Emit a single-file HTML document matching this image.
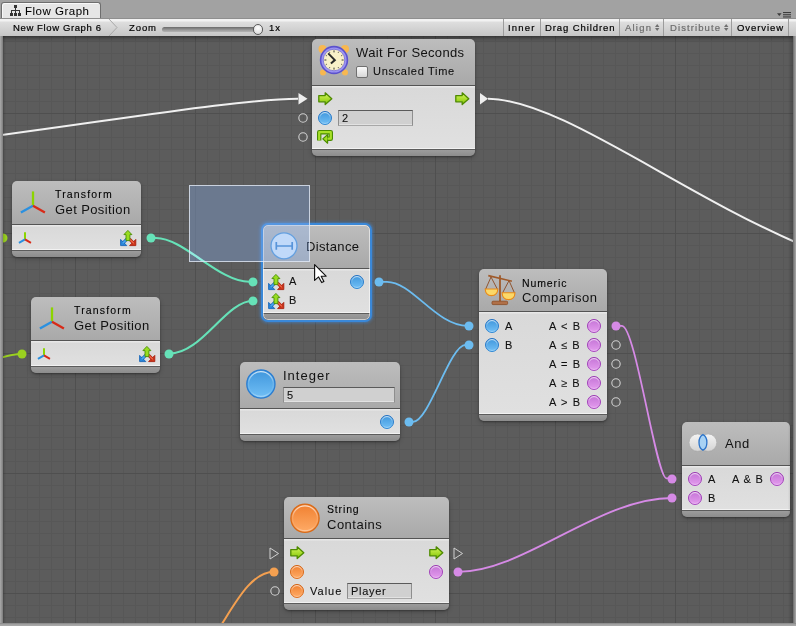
<!DOCTYPE html><html><head><meta charset="utf-8"><style>
*{margin:0;padding:0;box-sizing:border-box}
html,body{width:796px;height:626px;overflow:hidden;background:#a3a3a3;font-family:"Liberation Sans", sans-serif;-webkit-font-smoothing:antialiased}
.t{position:absolute;white-space:pre;will-change:transform}
.a{position:absolute;overflow:visible}
.node{position:absolute;border-radius:5px;overflow:hidden}
.hdr{background:linear-gradient(#bdbdbd,#a9a9a9)}
.sep{height:1px;background:#545454}
.bdy{background:linear-gradient(#e8e8e8 0,#e8e8e8 1px,#d9d9d9 2px,#e0e0e0 100%);border-bottom:1px solid #f2f2f2}
.ftr{background:linear-gradient(#9c9c9c,#8c8c8c);border-top:1px solid #5c5c5c}
.fld{position:absolute;background:#d0d0d0;border:1px solid #8e8e8e;border-top-color:#5a5a5a;border-bottom-color:#a8a8a8;box-shadow:inset 0 -1px 0 #e2e2e2}
</style></head><body>
<div style="position:absolute;left:0;top:0;width:796px;height:18px;background:#a2a2a2"></div>
<div style="position:absolute;left:1px;top:2px;width:100px;height:17px;background:#e6e6e6;border:1px solid #6e6e6e;border-bottom:none;border-radius:3px 3px 0 0;box-shadow:inset 1px 1px 0 #f8f8f8"></div>
<svg class="a" style="left:10px;top:5px" width="12" height="11" viewBox="0 0 12 11" shape-rendering="crispEdges"><rect x="4" y="0" width="3" height="3" fill="#333"/><rect x="5" y="3" width="1" height="2" fill="#333"/><rect x="1" y="5" width="9" height="1" fill="#333"/><rect x="1" y="5" width="1" height="3" fill="#333"/><rect x="5" y="5" width="1" height="3" fill="#333"/><rect x="9" y="5" width="1" height="3" fill="#333"/><rect x="0" y="8" width="3" height="3" fill="#333"/><rect x="4" y="8" width="3" height="3" fill="#333"/><rect x="8" y="8" width="3" height="3" fill="#333"/></svg>
<div class="t" style="left:25.2px;top:6.37px;font-size:11.5px;line-height:11.5px;font-weight:400;letter-spacing:0.5px;color:#000;-webkit-text-stroke:0.05px #000;">Flow Graph</div>
<svg class="a" style="left:776px;top:11px" width="20" height="8"><path d="M1,2.2 H5.6 L3.3,4.9 Z" fill="#3c3c3c"/><rect x="7" y="1" width="8" height="1.1" fill="#3c3c3c"/><rect x="7" y="3.2" width="8" height="1.1" fill="#3c3c3c"/><rect x="7" y="5.4" width="8" height="1.1" fill="#3c3c3c"/></svg>
<div style="position:absolute;left:0;top:18px;width:796px;height:18px;background:linear-gradient(#f2f2f2 0px,#f2f2f2 2px,#dedede 3px,#c6c6c6 100%);border-top:1px solid #8f8f8f"></div>
<div class="t" style="left:12.7px;top:22.66px;font-size:9.5px;line-height:9.5px;font-weight:400;letter-spacing:0.62px;color:#000;-webkit-text-stroke:0.2px #000;">New Flow Graph 6</div>
<svg class="a" style="left:108px;top:19px" width="12" height="17"><path d="M1,0 L9,8.5 L1,17" stroke="#a8a8a8" fill="none"/></svg>
<div class="t" style="left:129px;top:22.66px;font-size:9.5px;line-height:9.5px;font-weight:400;letter-spacing:0.9px;color:#000;-webkit-text-stroke:0.2px #000;">Zoom</div>
<div style="position:absolute;left:162px;top:26.5px;width:96px;height:5px;border-radius:2.5px;background:linear-gradient(#6a6a6a,#9a9a9a 60%,#b4b4b4)"></div>
<div style="position:absolute;left:252.8px;top:24px;width:10.5px;height:10.5px;border-radius:50%;background:radial-gradient(circle at 50% 35%,#ffffff,#d4d4d4);border:1px solid #5a5a5a"></div>
<div class="t" style="left:269.3px;top:22.66px;font-size:9.5px;line-height:9.5px;font-weight:400;letter-spacing:1.0px;color:#000;-webkit-text-stroke:0.2px #000;">1x</div>
<div style="position:absolute;left:503px;top:19px;width:1px;height:17px;background:#9c9c9c"></div>
<div style="position:absolute;left:540px;top:19px;width:1px;height:17px;background:#9c9c9c"></div>
<div style="position:absolute;left:619px;top:19px;width:1px;height:17px;background:#9c9c9c"></div>
<div style="position:absolute;left:663px;top:19px;width:1px;height:17px;background:#9c9c9c"></div>
<div style="position:absolute;left:731px;top:19px;width:1px;height:17px;background:#9c9c9c"></div>
<div style="position:absolute;left:788px;top:19px;width:1px;height:17px;background:#9c9c9c"></div>
<div class="t" style="left:508.1px;top:22.66px;font-size:9.5px;line-height:9.5px;font-weight:400;letter-spacing:1.2px;color:#000;-webkit-text-stroke:0.2px #000;">Inner</div>
<div class="t" style="left:545.3px;top:22.66px;font-size:9.5px;line-height:9.5px;font-weight:400;letter-spacing:0.9px;color:#000;-webkit-text-stroke:0.2px #000;">Drag Children</div>
<div class="t" style="left:625.2px;top:22.66px;font-size:9.5px;line-height:9.5px;font-weight:400;letter-spacing:1.2px;color:#6c6c6c;-webkit-text-stroke:0.2px #6c6c6c;">Align</div>
<div class="t" style="left:669.6px;top:22.66px;font-size:9.5px;line-height:9.5px;font-weight:400;letter-spacing:1.1px;color:#6c6c6c;-webkit-text-stroke:0.2px #6c6c6c;">Distribute</div>
<div class="t" style="left:737.3px;top:22.66px;font-size:9.5px;line-height:9.5px;font-weight:400;letter-spacing:0.93px;color:#000;-webkit-text-stroke:0.2px #000;">Overview</div>
<svg class="a" style="left:655.4px;top:24px" width="5" height="7"><path d="M0,3 L2.2,0 L4.4,3 Z M0,4 L2.2,7 L4.4,4 Z" fill="#707070"/></svg>
<svg class="a" style="left:723.6px;top:24px" width="5" height="7"><path d="M0,3 L2.2,0 L4.4,3 Z M0,4 L2.2,7 L4.4,4 Z" fill="#707070"/></svg>
<div style="position:absolute;left:0;top:36px;width:796px;height:590px;background:#a8a8a8"></div>
<svg class="a" style="left:3px;top:36px" width="790" height="587" shape-rendering="crispEdges"><rect width="790" height="587" fill="#5c5c5c"/><rect x="0" y="0" width="1" height="587" fill="#575757"/><rect x="12" y="0" width="1" height="587" fill="#575757"/><rect x="24" y="0" width="1" height="587" fill="#575757"/><rect x="36" y="0" width="1" height="587" fill="#575757"/><rect x="48" y="0" width="1" height="587" fill="#575757"/><rect x="60" y="0" width="1" height="587" fill="#575757"/><rect x="84" y="0" width="1" height="587" fill="#575757"/><rect x="96" y="0" width="1" height="587" fill="#575757"/><rect x="108" y="0" width="1" height="587" fill="#575757"/><rect x="120" y="0" width="1" height="587" fill="#575757"/><rect x="132" y="0" width="1" height="587" fill="#575757"/><rect x="144" y="0" width="1" height="587" fill="#575757"/><rect x="156" y="0" width="1" height="587" fill="#575757"/><rect x="168" y="0" width="1" height="587" fill="#575757"/><rect x="180" y="0" width="1" height="587" fill="#575757"/><rect x="204" y="0" width="1" height="587" fill="#575757"/><rect x="216" y="0" width="1" height="587" fill="#575757"/><rect x="228" y="0" width="1" height="587" fill="#575757"/><rect x="240" y="0" width="1" height="587" fill="#575757"/><rect x="252" y="0" width="1" height="587" fill="#575757"/><rect x="264" y="0" width="1" height="587" fill="#575757"/><rect x="276" y="0" width="1" height="587" fill="#575757"/><rect x="288" y="0" width="1" height="587" fill="#575757"/><rect x="300" y="0" width="1" height="587" fill="#575757"/><rect x="324" y="0" width="1" height="587" fill="#575757"/><rect x="336" y="0" width="1" height="587" fill="#575757"/><rect x="348" y="0" width="1" height="587" fill="#575757"/><rect x="360" y="0" width="1" height="587" fill="#575757"/><rect x="372" y="0" width="1" height="587" fill="#575757"/><rect x="384" y="0" width="1" height="587" fill="#575757"/><rect x="396" y="0" width="1" height="587" fill="#575757"/><rect x="408" y="0" width="1" height="587" fill="#575757"/><rect x="420" y="0" width="1" height="587" fill="#575757"/><rect x="444" y="0" width="1" height="587" fill="#575757"/><rect x="456" y="0" width="1" height="587" fill="#575757"/><rect x="468" y="0" width="1" height="587" fill="#575757"/><rect x="480" y="0" width="1" height="587" fill="#575757"/><rect x="492" y="0" width="1" height="587" fill="#575757"/><rect x="504" y="0" width="1" height="587" fill="#575757"/><rect x="516" y="0" width="1" height="587" fill="#575757"/><rect x="528" y="0" width="1" height="587" fill="#575757"/><rect x="540" y="0" width="1" height="587" fill="#575757"/><rect x="564" y="0" width="1" height="587" fill="#575757"/><rect x="576" y="0" width="1" height="587" fill="#575757"/><rect x="588" y="0" width="1" height="587" fill="#575757"/><rect x="600" y="0" width="1" height="587" fill="#575757"/><rect x="612" y="0" width="1" height="587" fill="#575757"/><rect x="624" y="0" width="1" height="587" fill="#575757"/><rect x="636" y="0" width="1" height="587" fill="#575757"/><rect x="648" y="0" width="1" height="587" fill="#575757"/><rect x="660" y="0" width="1" height="587" fill="#575757"/><rect x="684" y="0" width="1" height="587" fill="#575757"/><rect x="696" y="0" width="1" height="587" fill="#575757"/><rect x="708" y="0" width="1" height="587" fill="#575757"/><rect x="720" y="0" width="1" height="587" fill="#575757"/><rect x="732" y="0" width="1" height="587" fill="#575757"/><rect x="744" y="0" width="1" height="587" fill="#575757"/><rect x="756" y="0" width="1" height="587" fill="#575757"/><rect x="768" y="0" width="1" height="587" fill="#575757"/><rect x="780" y="0" width="1" height="587" fill="#575757"/><rect x="0" y="5" width="790" height="1" fill="#575757"/><rect x="0" y="17" width="790" height="1" fill="#575757"/><rect x="0" y="29" width="790" height="1" fill="#575757"/><rect x="0" y="41" width="790" height="1" fill="#575757"/><rect x="0" y="53" width="790" height="1" fill="#575757"/><rect x="0" y="65" width="790" height="1" fill="#575757"/><rect x="0" y="89" width="790" height="1" fill="#575757"/><rect x="0" y="101" width="790" height="1" fill="#575757"/><rect x="0" y="113" width="790" height="1" fill="#575757"/><rect x="0" y="125" width="790" height="1" fill="#575757"/><rect x="0" y="137" width="790" height="1" fill="#575757"/><rect x="0" y="149" width="790" height="1" fill="#575757"/><rect x="0" y="161" width="790" height="1" fill="#575757"/><rect x="0" y="173" width="790" height="1" fill="#575757"/><rect x="0" y="185" width="790" height="1" fill="#575757"/><rect x="0" y="209" width="790" height="1" fill="#575757"/><rect x="0" y="221" width="790" height="1" fill="#575757"/><rect x="0" y="233" width="790" height="1" fill="#575757"/><rect x="0" y="245" width="790" height="1" fill="#575757"/><rect x="0" y="257" width="790" height="1" fill="#575757"/><rect x="0" y="269" width="790" height="1" fill="#575757"/><rect x="0" y="281" width="790" height="1" fill="#575757"/><rect x="0" y="293" width="790" height="1" fill="#575757"/><rect x="0" y="305" width="790" height="1" fill="#575757"/><rect x="0" y="329" width="790" height="1" fill="#575757"/><rect x="0" y="341" width="790" height="1" fill="#575757"/><rect x="0" y="353" width="790" height="1" fill="#575757"/><rect x="0" y="365" width="790" height="1" fill="#575757"/><rect x="0" y="377" width="790" height="1" fill="#575757"/><rect x="0" y="389" width="790" height="1" fill="#575757"/><rect x="0" y="401" width="790" height="1" fill="#575757"/><rect x="0" y="413" width="790" height="1" fill="#575757"/><rect x="0" y="425" width="790" height="1" fill="#575757"/><rect x="0" y="449" width="790" height="1" fill="#575757"/><rect x="0" y="461" width="790" height="1" fill="#575757"/><rect x="0" y="473" width="790" height="1" fill="#575757"/><rect x="0" y="485" width="790" height="1" fill="#575757"/><rect x="0" y="497" width="790" height="1" fill="#575757"/><rect x="0" y="509" width="790" height="1" fill="#575757"/><rect x="0" y="521" width="790" height="1" fill="#575757"/><rect x="0" y="533" width="790" height="1" fill="#575757"/><rect x="0" y="545" width="790" height="1" fill="#575757"/><rect x="0" y="569" width="790" height="1" fill="#575757"/><rect x="0" y="581" width="790" height="1" fill="#575757"/><rect x="72" y="0" width="1" height="587" fill="#4f4f4f"/><rect x="192" y="0" width="1" height="587" fill="#4f4f4f"/><rect x="312" y="0" width="1" height="587" fill="#4f4f4f"/><rect x="432" y="0" width="1" height="587" fill="#4f4f4f"/><rect x="552" y="0" width="1" height="587" fill="#4f4f4f"/><rect x="672" y="0" width="1" height="587" fill="#4f4f4f"/><rect x="0" y="77" width="790" height="1" fill="#4f4f4f"/><rect x="0" y="197" width="790" height="1" fill="#4f4f4f"/><rect x="0" y="317" width="790" height="1" fill="#4f4f4f"/><rect x="0" y="437" width="790" height="1" fill="#4f4f4f"/><rect x="0" y="557" width="790" height="1" fill="#4f4f4f"/></svg>
<div style="position:absolute;left:3px;top:36px;width:790px;height:7px;background:linear-gradient(rgba(0,0,0,.4),rgba(0,0,0,.12) 45%,rgba(0,0,0,0))"></div>
<div style="position:absolute;left:190px;top:186px;width:119px;height:75px;background:#5c5c5c"></div>
<div style="position:absolute;left:195px;top:186px;width:1px;height:75px;background:#535353"></div>
<svg width="0" height="0" style="position:absolute"><defs>
<linearGradient id="gArrow" x1="0" y1="0" x2="0" y2="1"><stop offset="0" stop-color="#d8f860"/><stop offset="1" stop-color="#80c400"/></linearGradient>
<linearGradient id="hl" x1="0" y1="0" x2="0" y2="1"><stop offset="0" stop-color="#fff" stop-opacity=".75"/><stop offset=".45" stop-color="#fff" stop-opacity=".15"/><stop offset=".8" stop-color="#fff" stop-opacity=".05"/><stop offset="1" stop-color="#fff" stop-opacity=".35"/></linearGradient>
<linearGradient id="gblue" x1="0" y1="0" x2="0" y2="1"><stop offset="0" stop-color="#3f96dc"/><stop offset="1" stop-color="#72c0f6"/></linearGradient>
<linearGradient id="sblue" x1="0" y1="0" x2="0" y2="1"><stop offset="0" stop-color="#2470c0"/><stop offset="1" stop-color="#3088d4"/></linearGradient>
<linearGradient id="gpink" x1="0" y1="0" x2="0" y2="1"><stop offset="0" stop-color="#c474d6"/><stop offset="1" stop-color="#e49cee"/></linearGradient>
<linearGradient id="spink" x1="0" y1="0" x2="0" y2="1"><stop offset="0" stop-color="#9838b0"/><stop offset="1" stop-color="#a848c0"/></linearGradient>
<linearGradient id="gorange" x1="0" y1="0" x2="0" y2="1"><stop offset="0" stop-color="#f08030"/><stop offset="1" stop-color="#ffac68"/></linearGradient>
<linearGradient id="sorange" x1="0" y1="0" x2="0" y2="1"><stop offset="0" stop-color="#d06010"/><stop offset="1" stop-color="#e07020"/></linearGradient>
</defs></svg>
<svg class="a" style="left:0;top:0" width="796" height="626"><path d="M-238.8,156.6 C-78.0,156.6 205.1,98.8 298,98.8" stroke="#f0f0f0" stroke-width="2" fill="none"/><path d="M488,98.8 C586.0,98.8 778.6,279.3 944,279.3" stroke="#f0f0f0" stroke-width="2" fill="none"/><path d="M150.5,238 L156.08,238 C183.59,238 218.73,281.8 249.3,281.8 L253.4,281.8" stroke="#66e2b8" stroke-width="2.1" fill="none"/><path d="M169.2,353.6 C202.39999999999998,353.6 225.5,300.7 253.4,300.7" stroke="#66e2b8" stroke-width="2.1" fill="none"/><path d="M-25,363 C-7,363 3.5,354 21.5,354" stroke="#9ad020" stroke-width="1.8" fill="none"/><path d="M379.3,281.8 L387.02,281.8 C412.24,281.8 435.97,325.9 467.84,325.9 L469.4,325.9" stroke="#6cbcf0" stroke-width="1.8" fill="none"/><path d="M409.4,421.8 L413.0,421.8 C429.06,421.8 449.77,344.9 465.54,344.9 L469.4,344.9" stroke="#6cbcf0" stroke-width="1.8" fill="none"/><path d="M616.2,325.8 L622,325.8 C635.4,325.8 656.3,478.3 666.5,478.3 L672.2,478.3" stroke="#d68ae6" stroke-width="1.8" fill="none"/><path d="M458.1,571.8 C524.4,571.8 598.3000000000001,498 672.2,498" stroke="#d68ae6" stroke-width="1.8" fill="none"/><path d="M170,669 C216.7,669 232.9,571.8 274.3,571.8" stroke="#f4a050" stroke-width="2.0" fill="none"/></svg>
<svg class="a" style="left:144.5px;top:232px" width="12" height="12"><circle cx="6" cy="6" r="4.5" fill="#66e2b8"/></svg>
<svg class="a" style="left:247.4px;top:275.8px" width="12" height="12"><circle cx="6" cy="6" r="4.5" fill="#66e2b8"/></svg>
<svg class="a" style="left:163.2px;top:348px" width="12" height="12"><circle cx="6" cy="6" r="4.5" fill="#66e2b8"/></svg>
<svg class="a" style="left:247.4px;top:294.9px" width="12" height="12"><circle cx="6" cy="6" r="4.5" fill="#66e2b8"/></svg>
<svg class="a" style="left:15.5px;top:348px" width="12" height="12"><circle cx="6" cy="6" r="4.5" fill="#9ad020"/></svg>
<svg class="a" style="left:-3px;top:232.3px" width="12" height="12"><circle cx="6" cy="6" r="4.5" fill="#9ad020"/></svg>
<svg class="a" style="left:373.3px;top:275.8px" width="12" height="12"><circle cx="6" cy="6" r="4.5" fill="#6cbcf0"/></svg>
<svg class="a" style="left:463.4px;top:319.9px" width="12" height="12"><circle cx="6" cy="6" r="4.5" fill="#6cbcf0"/></svg>
<svg class="a" style="left:403.4px;top:415.8px" width="12" height="12"><circle cx="6" cy="6" r="4.5" fill="#6cbcf0"/></svg>
<svg class="a" style="left:463.4px;top:338.9px" width="12" height="12"><circle cx="6" cy="6" r="4.5" fill="#6cbcf0"/></svg>
<svg class="a" style="left:610.2px;top:319.8px" width="12" height="12"><circle cx="6" cy="6" r="4.5" fill="#d68ae6"/></svg>
<svg class="a" style="left:666.3px;top:472.5px" width="12" height="12"><circle cx="6" cy="6" r="4.5" fill="#d68ae6"/></svg>
<svg class="a" style="left:452.1px;top:565.8px" width="12" height="12"><circle cx="6" cy="6" r="4.5" fill="#d68ae6"/></svg>
<svg class="a" style="left:666.2px;top:492px" width="12" height="12"><circle cx="6" cy="6" r="4.5" fill="#d68ae6"/></svg>
<svg class="a" style="left:268.3px;top:565.8px" width="12" height="12"><circle cx="6" cy="6" r="4.5" fill="#f4a050"/></svg>
<svg class="a" style="left:0;top:0" width="796" height="626"><path d="M298.5,93 L307.5,98.8 L298.5,104.6 Z" fill="#eeeeee"/><path d="M480,93 L488,98.8 L480,104.6 Z" fill="#eeeeee"/></svg>
<svg class="a" style="left:296.7px;top:111.8px" width="12" height="12"><circle cx="6" cy="6" r="4.2" fill="none" stroke="#d0d0d0" stroke-width="1.1"/></svg>
<svg class="a" style="left:296.7px;top:130.7px" width="12" height="12"><circle cx="6" cy="6" r="4.2" fill="none" stroke="#d0d0d0" stroke-width="1.1"/></svg>
<svg class="a" style="left:610.4px;top:338.7px" width="12" height="12"><circle cx="6" cy="6" r="4.2" fill="none" stroke="#d0d0d0" stroke-width="1.1"/></svg>
<svg class="a" style="left:610.4px;top:357.8px" width="12" height="12"><circle cx="6" cy="6" r="4.2" fill="none" stroke="#d0d0d0" stroke-width="1.1"/></svg>
<svg class="a" style="left:610.4px;top:377px" width="12" height="12"><circle cx="6" cy="6" r="4.2" fill="none" stroke="#d0d0d0" stroke-width="1.1"/></svg>
<svg class="a" style="left:610.4px;top:396.2px" width="12" height="12"><circle cx="6" cy="6" r="4.2" fill="none" stroke="#d0d0d0" stroke-width="1.1"/></svg>
<svg class="a" style="left:268.7px;top:585.1px" width="12" height="12"><circle cx="6" cy="6" r="4.2" fill="none" stroke="#d0d0d0" stroke-width="1.1"/></svg>
<svg class="a" style="left:269px;top:546.5px" width="11" height="13"><path d="M1,1 L9.5,6.5 L1,12 Z" fill="none" stroke="#d0d0d0" stroke-width="1"/></svg>
<svg class="a" style="left:453px;top:546.5px" width="11" height="13"><path d="M1,1 L9.5,6.5 L1,12 Z" fill="none" stroke="#d0d0d0" stroke-width="1"/></svg>
<div class="node" style="left:312px;top:39px;width:163px;height:117px;box-shadow:0 1px 2px rgba(0,0,0,.3), 0 2px 5px rgba(0,0,0,.2);"><div class="hdr" style="height:46px"></div><div class="sep"></div><div class="bdy" style="height:63px"></div><div class="ftr" style="height:7px"></div></div>
<svg class="a" style="left:317.5px;top:44px" width="32" height="32" viewBox="0 0 32 32"><circle cx="4.5" cy="5" r="4" fill="#f8b850"/><circle cx="27" cy="5" r="4" fill="#f8b850"/><circle cx="5" cy="28.5" r="3" fill="#f8b850"/><circle cx="27" cy="28.5" r="3" fill="#f8b850"/><circle cx="16" cy="16" r="14.2" fill="#5c52cc"/><circle cx="16" cy="16" r="12.6" fill="#9c94f2"/><circle cx="16" cy="16" r="10.8" fill="#f8f0c8" stroke="#7068d8" stroke-width="0.8"/><path d="M16.00,8.40 L16.00,6.40" stroke="#3a3a3a" stroke-width="1.0"/><path d="M20.10,8.90 L20.80,7.69" stroke="#3a3a3a" stroke-width="0.8"/><path d="M23.10,11.90 L24.31,11.20" stroke="#3a3a3a" stroke-width="0.8"/><path d="M23.60,16.00 L25.60,16.00" stroke="#3a3a3a" stroke-width="1.0"/><path d="M23.10,20.10 L24.31,20.80" stroke="#3a3a3a" stroke-width="0.8"/><path d="M20.10,23.10 L20.80,24.31" stroke="#3a3a3a" stroke-width="0.8"/><path d="M16.00,23.60 L16.00,25.60" stroke="#3a3a3a" stroke-width="1.0"/><path d="M11.90,23.10 L11.20,24.31" stroke="#3a3a3a" stroke-width="0.8"/><path d="M8.90,20.10 L7.69,20.80" stroke="#3a3a3a" stroke-width="0.8"/><path d="M8.40,16.00 L6.40,16.00" stroke="#3a3a3a" stroke-width="1.0"/><path d="M8.90,11.90 L7.69,11.20" stroke="#3a3a3a" stroke-width="0.8"/><path d="M11.90,8.90 L11.20,7.69" stroke="#3a3a3a" stroke-width="0.8"/><path d="M10.2,9.4 L16.8,16.1 L12.9,19.5" stroke="#2a2a2a" stroke-width="2" fill="none"/></svg>
<div class="t" style="left:355.7px;top:45.60px;font-size:13px;line-height:13px;font-weight:400;letter-spacing:0.35px;color:#111;">Wait For Seconds</div>
<div style="position:absolute;left:356px;top:66px;width:12px;height:12px;border:1px solid #707070;border-radius:2px;background:linear-gradient(#fafafa,#d8d8d8)"></div>
<div class="t" style="left:372.6px;top:66.39px;font-size:11px;line-height:11px;font-weight:400;letter-spacing:0.7px;color:#111;-webkit-text-stroke:0.1px #111;">Unscaled Time</div>
<svg class="a" style="left:317.5px;top:92px" width="15" height="14" viewBox="0 0 15 14"><path d="M0.8,3.6 H7.2 V0.8 L13.8,6.7 L7.2,12.6 V9.8 H0.8 Z" fill="url(#gArrow)" stroke="#4e8a00" stroke-width="1.3" stroke-linejoin="round"/></svg>
<svg class="a" style="left:455px;top:92px" width="15" height="14" viewBox="0 0 15 14"><path d="M0.8,3.6 H7.2 V0.8 L13.8,6.7 L7.2,12.6 V9.8 H0.8 Z" fill="url(#gArrow)" stroke="#4e8a00" stroke-width="1.3" stroke-linejoin="round"/></svg>
<svg class="a" style="left:317.0px;top:110.0px" width="16.0" height="16.0" viewBox="0 0 16.0 16.0"><circle cx="8.0" cy="8.0" r="6.5" fill="url(#gblue)" stroke="url(#sblue)" stroke-width="1"/><circle cx="8.0" cy="8.0" r="5.4" fill="none" stroke="url(#hl)" stroke-width="1"/></svg>
<div class="fld" style="left:338px;top:110px;width:75px;height:16px"></div>
<div class="t" style="left:341.5px;top:113.49px;font-size:11px;line-height:11px;font-weight:400;letter-spacing:0.7px;color:#111;-webkit-text-stroke:0.1px #111;">2</div>
<svg class="a" style="left:317px;top:130px" width="18" height="15" viewBox="0 0 18 15"><path d="M2.2,10.6 V2.2 H13.8 V8.7 H10" stroke="#4a8c00" stroke-width="4.4" fill="none" stroke-linejoin="round"/><path d="M10.6,4.6 L5.8,8.9 L10.6,13.2 Z" fill="#a0dc20" stroke="#4a8c00" stroke-width="1.2" stroke-linejoin="round"/><path d="M2.2,10.2 V2.2 H13.8 V8.7 H10.5" stroke="#a8e028" stroke-width="2.2" fill="none" stroke-linejoin="round"/></svg>
<div class="node" style="left:12px;top:181px;width:129px;height:76px;box-shadow:0 1px 2px rgba(0,0,0,.3), 0 2px 5px rgba(0,0,0,.2);"><div class="hdr" style="height:43px"></div><div class="sep"></div><div class="bdy" style="height:25px"></div><div class="ftr" style="height:7px"></div></div>
<svg class="a" style="left:19px;top:191px" width="28.0" height="24.0" viewBox="0 0 28 24"><path d="M14,14.7 L14,0.4" stroke="#8cd400" stroke-width="2.3"/><path d="M14,14.7 L1.9,21.6" stroke="#2a90e0" stroke-width="2.3"/><path d="M14,14.7 L25.9,21.6" stroke="#d82a18" stroke-width="2.3"/></svg>
<div class="t" style="left:54.8px;top:189.01px;font-size:10.5px;line-height:10.5px;font-weight:400;letter-spacing:1.15px;color:#000;-webkit-text-stroke:0.1px #000;">Transform</div>
<div class="t" style="left:55.2px;top:203.00px;font-size:13px;line-height:13px;font-weight:400;letter-spacing:0.4px;color:#111;">Get Position</div>
<svg class="a" style="left:17.9px;top:231.85px" width="14.0" height="12.0" viewBox="0 0 28 24"><path d="M14,14.7 L14,0.4" stroke="#8cd400" stroke-width="4.0"/><path d="M14,14.7 L1.9,21.6" stroke="#2a90e0" stroke-width="4.0"/><path d="M14,14.7 L25.9,21.6" stroke="#d82a18" stroke-width="4.0"/></svg>
<svg class="a" style="left:120px;top:230px" width="17" height="17" viewBox="0 0 17 17"><path d="M0.6,9.4 V15.6 H6.8 Z" fill="#2a88dc" stroke="#1a66b8" stroke-width="0.9" stroke-linejoin="round"/><path d="M2.6,13.4 L6.9,9.1" stroke="#1a66b8" stroke-width="3"/><path d="M2.6,13.4 L6.9,9.1" stroke="#48a8f0" stroke-width="1.6"/><path d="M15.8,9.4 V15.6 H9.6 Z" fill="#d0381c" stroke="#a82010" stroke-width="0.9" stroke-linejoin="round"/><path d="M13.8,13.4 L9.5,9.1" stroke="#a82010" stroke-width="3"/><path d="M13.8,13.4 L9.5,9.1" stroke="#f06040" stroke-width="1.6"/><path d="M7.9,0.4 L11.9,4.6 H9.9 V10.6 H6.0 V4.6 H3.9 Z" fill="#98dc20" stroke="#4a9000" stroke-width="0.9" stroke-linejoin="round"/></svg>
<div class="node" style="left:31px;top:297px;width:129px;height:76px;box-shadow:0 1px 2px rgba(0,0,0,.3), 0 2px 5px rgba(0,0,0,.2);"><div class="hdr" style="height:43px"></div><div class="sep"></div><div class="bdy" style="height:25px"></div><div class="ftr" style="height:7px"></div></div>
<svg class="a" style="left:38px;top:307px" width="28.0" height="24.0" viewBox="0 0 28 24"><path d="M14,14.7 L14,0.4" stroke="#8cd400" stroke-width="2.3"/><path d="M14,14.7 L1.9,21.6" stroke="#2a90e0" stroke-width="2.3"/><path d="M14,14.7 L25.9,21.6" stroke="#d82a18" stroke-width="2.3"/></svg>
<div class="t" style="left:73.8px;top:305.01px;font-size:10.5px;line-height:10.5px;font-weight:400;letter-spacing:1.15px;color:#000;-webkit-text-stroke:0.1px #000;">Transform</div>
<div class="t" style="left:74.2px;top:319.00px;font-size:13px;line-height:13px;font-weight:400;letter-spacing:0.4px;color:#111;">Get Position</div>
<svg class="a" style="left:36.9px;top:347.85px" width="14.0" height="12.0" viewBox="0 0 28 24"><path d="M14,14.7 L14,0.4" stroke="#8cd400" stroke-width="4.0"/><path d="M14,14.7 L1.9,21.6" stroke="#2a90e0" stroke-width="4.0"/><path d="M14,14.7 L25.9,21.6" stroke="#d82a18" stroke-width="4.0"/></svg>
<svg class="a" style="left:139px;top:346px" width="17" height="17" viewBox="0 0 17 17"><path d="M0.6,9.4 V15.6 H6.8 Z" fill="#2a88dc" stroke="#1a66b8" stroke-width="0.9" stroke-linejoin="round"/><path d="M2.6,13.4 L6.9,9.1" stroke="#1a66b8" stroke-width="3"/><path d="M2.6,13.4 L6.9,9.1" stroke="#48a8f0" stroke-width="1.6"/><path d="M15.8,9.4 V15.6 H9.6 Z" fill="#d0381c" stroke="#a82010" stroke-width="0.9" stroke-linejoin="round"/><path d="M13.8,13.4 L9.5,9.1" stroke="#a82010" stroke-width="3"/><path d="M13.8,13.4 L9.5,9.1" stroke="#f06040" stroke-width="1.6"/><path d="M7.9,0.4 L11.9,4.6 H9.9 V10.6 H6.0 V4.6 H3.9 Z" fill="#98dc20" stroke="#4a9000" stroke-width="0.9" stroke-linejoin="round"/></svg>
<div class="node" style="left:263px;top:225px;width:107px;height:95px;box-shadow:0 0 0 2px #3a88d8, 0 0 3px 3px rgba(60,140,230,.55);"><div class="hdr" style="height:43px"></div><div class="sep"></div><div class="bdy" style="height:44px"></div><div class="ftr" style="height:7px"></div><div style="position:absolute;left:0;top:0;right:0;bottom:0;border:1px solid rgba(255,255,255,.55);border-radius:5px"></div></div>
<svg class="a" style="left:270px;top:232px" width="28" height="28" viewBox="0 0 28 28"><circle cx="14" cy="13.8" r="13" fill="#dcedfc" stroke="#5096d6" stroke-width="1.3"/><path d="M6.3,10 V17.8 M22.2,10 V17.8 M6.3,14 H22.2" stroke="#3d84cc" stroke-width="1.7" fill="none"/></svg>
<div class="t" style="left:306px;top:240.00px;font-size:13px;line-height:13px;font-weight:400;letter-spacing:0.35px;color:#111;">Distance</div>
<svg class="a" style="left:268px;top:274px" width="17" height="17" viewBox="0 0 17 17"><path d="M0.6,9.4 V15.6 H6.8 Z" fill="#2a88dc" stroke="#1a66b8" stroke-width="0.9" stroke-linejoin="round"/><path d="M2.6,13.4 L6.9,9.1" stroke="#1a66b8" stroke-width="3"/><path d="M2.6,13.4 L6.9,9.1" stroke="#48a8f0" stroke-width="1.6"/><path d="M15.8,9.4 V15.6 H9.6 Z" fill="#d0381c" stroke="#a82010" stroke-width="0.9" stroke-linejoin="round"/><path d="M13.8,13.4 L9.5,9.1" stroke="#a82010" stroke-width="3"/><path d="M13.8,13.4 L9.5,9.1" stroke="#f06040" stroke-width="1.6"/><path d="M7.9,0.4 L11.9,4.6 H9.9 V10.6 H6.0 V4.6 H3.9 Z" fill="#98dc20" stroke="#4a9000" stroke-width="0.9" stroke-linejoin="round"/></svg>
<svg class="a" style="left:268px;top:293px" width="17" height="17" viewBox="0 0 17 17"><path d="M0.6,9.4 V15.6 H6.8 Z" fill="#2a88dc" stroke="#1a66b8" stroke-width="0.9" stroke-linejoin="round"/><path d="M2.6,13.4 L6.9,9.1" stroke="#1a66b8" stroke-width="3"/><path d="M2.6,13.4 L6.9,9.1" stroke="#48a8f0" stroke-width="1.6"/><path d="M15.8,9.4 V15.6 H9.6 Z" fill="#d0381c" stroke="#a82010" stroke-width="0.9" stroke-linejoin="round"/><path d="M13.8,13.4 L9.5,9.1" stroke="#a82010" stroke-width="3"/><path d="M13.8,13.4 L9.5,9.1" stroke="#f06040" stroke-width="1.6"/><path d="M7.9,0.4 L11.9,4.6 H9.9 V10.6 H6.0 V4.6 H3.9 Z" fill="#98dc20" stroke="#4a9000" stroke-width="0.9" stroke-linejoin="round"/></svg>
<div class="t" style="left:288.8px;top:276.49px;font-size:11px;line-height:11px;font-weight:400;letter-spacing:0px;color:#111;-webkit-text-stroke:0.1px #111;">A</div>
<div class="t" style="left:288.8px;top:295.49px;font-size:11px;line-height:11px;font-weight:400;letter-spacing:0px;color:#111;-webkit-text-stroke:0.1px #111;">B</div>
<svg class="a" style="left:348.9px;top:274.0px" width="16.0" height="16.0" viewBox="0 0 16.0 16.0"><circle cx="8.0" cy="8.0" r="6.5" fill="url(#gblue)" stroke="url(#sblue)" stroke-width="1"/><circle cx="8.0" cy="8.0" r="5.4" fill="none" stroke="url(#hl)" stroke-width="1"/></svg>
<div class="node" style="left:479px;top:269px;width:128px;height:152px;box-shadow:0 1px 2px rgba(0,0,0,.3), 0 2px 5px rgba(0,0,0,.2);"><div class="hdr" style="height:42px"></div><div class="sep"></div><div class="bdy" style="height:102px"></div><div class="ftr" style="height:7px"></div></div>
<svg class="a" style="left:482px;top:272px" width="36" height="36" viewBox="0 0 36 36"><path d="M9,5 L3.5,17.5 M9,5 L15.5,17.5 M27,8.6 L20.5,21 M27,8.6 L32.5,21" stroke="#8a4a22" stroke-width="0.9" fill="none"/><path d="M18,3.2 V29.5" stroke="#a05a2a" stroke-width="1.8"/><path d="M6.3,3.6 L29.9,9.2" stroke="#a05a2a" stroke-width="1.6"/><rect x="10" y="29.2" width="15.6" height="3.4" rx="1" fill="#b07048" stroke="#8a4a22" stroke-width="0.8"/><path d="M3.2,17 H15.8 Q15.5,23.6 9.5,23.6 Q3.5,23.6 3.2,17 Z" fill="#fbd868" stroke="#e88a18" stroke-width="1.1"/><path d="M20.1,20.7 H33 Q32.7,27.6 26.5,27.6 Q20.4,27.6 20.1,20.7 Z" fill="#fbd868" stroke="#e88a18" stroke-width="1.1"/></svg>
<div class="t" style="left:521.7px;top:278.11px;font-size:10.5px;line-height:10.5px;font-weight:400;letter-spacing:0.9px;color:#000;-webkit-text-stroke:0.1px #000;">Numeric</div>
<div class="t" style="left:521.8px;top:291.00px;font-size:13px;line-height:13px;font-weight:400;letter-spacing:0.55px;color:#111;">Comparison</div>
<svg class="a" style="left:483.7px;top:318.0px" width="16.0" height="16.0" viewBox="0 0 16.0 16.0"><circle cx="8.0" cy="8.0" r="6.5" fill="url(#gblue)" stroke="url(#sblue)" stroke-width="1"/><circle cx="8.0" cy="8.0" r="5.4" fill="none" stroke="url(#hl)" stroke-width="1"/></svg>
<svg class="a" style="left:483.7px;top:337.0px" width="16.0" height="16.0" viewBox="0 0 16.0 16.0"><circle cx="8.0" cy="8.0" r="6.5" fill="url(#gblue)" stroke="url(#sblue)" stroke-width="1"/><circle cx="8.0" cy="8.0" r="5.4" fill="none" stroke="url(#hl)" stroke-width="1"/></svg>
<div class="t" style="left:505.3px;top:321.19px;font-size:11px;line-height:11px;font-weight:400;letter-spacing:0px;color:#111;-webkit-text-stroke:0.1px #111;">A</div>
<div class="t" style="left:505.3px;top:340.19px;font-size:11px;line-height:11px;font-weight:400;letter-spacing:0px;color:#111;-webkit-text-stroke:0.1px #111;">B</div>
<div class="t" style="left:548.8px;top:321.19px;font-size:11px;line-height:11px;font-weight:400;letter-spacing:1.1px;color:#111;-webkit-text-stroke:0.1px #111;">A &lt; B</div>
<svg class="a" style="left:585.6px;top:318.0px" width="16.0" height="16.0" viewBox="0 0 16.0 16.0"><circle cx="8.0" cy="8.0" r="6.5" fill="url(#gpink)" stroke="url(#spink)" stroke-width="1"/><circle cx="8.0" cy="8.0" r="5.4" fill="none" stroke="url(#hl)" stroke-width="1"/></svg>
<div class="t" style="left:548.8px;top:340.19px;font-size:11px;line-height:11px;font-weight:400;letter-spacing:1.1px;color:#111;-webkit-text-stroke:0.1px #111;">A ≤ B</div>
<svg class="a" style="left:585.6px;top:337.0px" width="16.0" height="16.0" viewBox="0 0 16.0 16.0"><circle cx="8.0" cy="8.0" r="6.5" fill="url(#gpink)" stroke="url(#spink)" stroke-width="1"/><circle cx="8.0" cy="8.0" r="5.4" fill="none" stroke="url(#hl)" stroke-width="1"/></svg>
<div class="t" style="left:548.8px;top:359.19px;font-size:11px;line-height:11px;font-weight:400;letter-spacing:1.1px;color:#111;-webkit-text-stroke:0.1px #111;">A = B</div>
<svg class="a" style="left:585.6px;top:356.0px" width="16.0" height="16.0" viewBox="0 0 16.0 16.0"><circle cx="8.0" cy="8.0" r="6.5" fill="url(#gpink)" stroke="url(#spink)" stroke-width="1"/><circle cx="8.0" cy="8.0" r="5.4" fill="none" stroke="url(#hl)" stroke-width="1"/></svg>
<div class="t" style="left:548.8px;top:378.19px;font-size:11px;line-height:11px;font-weight:400;letter-spacing:1.1px;color:#111;-webkit-text-stroke:0.1px #111;">A ≥ B</div>
<svg class="a" style="left:585.6px;top:375.0px" width="16.0" height="16.0" viewBox="0 0 16.0 16.0"><circle cx="8.0" cy="8.0" r="6.5" fill="url(#gpink)" stroke="url(#spink)" stroke-width="1"/><circle cx="8.0" cy="8.0" r="5.4" fill="none" stroke="url(#hl)" stroke-width="1"/></svg>
<div class="t" style="left:548.8px;top:397.19px;font-size:11px;line-height:11px;font-weight:400;letter-spacing:1.1px;color:#111;-webkit-text-stroke:0.1px #111;">A &gt; B</div>
<svg class="a" style="left:585.6px;top:394.0px" width="16.0" height="16.0" viewBox="0 0 16.0 16.0"><circle cx="8.0" cy="8.0" r="6.5" fill="url(#gpink)" stroke="url(#spink)" stroke-width="1"/><circle cx="8.0" cy="8.0" r="5.4" fill="none" stroke="url(#hl)" stroke-width="1"/></svg>
<div class="node" style="left:240px;top:362px;width:160px;height:79px;box-shadow:0 1px 2px rgba(0,0,0,.3), 0 2px 5px rgba(0,0,0,.2);"><div class="hdr" style="height:46px"></div><div class="sep"></div><div class="bdy" style="height:25px"></div><div class="ftr" style="height:7px"></div></div>
<svg class="a" style="left:246px;top:369px" width="30" height="30" viewBox="0 0 30 30"><circle cx="14.9" cy="15" r="14.1" fill="url(#gblue)" stroke="#2a7cd0" stroke-width="1.3"/><circle cx="14.9" cy="15" r="12.4" fill="none" stroke="url(#hl)" stroke-width="1.2"/></svg>
<div class="t" style="left:283px;top:369.00px;font-size:13px;line-height:13px;font-weight:400;letter-spacing:1.0px;color:#111;">Integer</div>
<div class="fld" style="left:283.3px;top:387.3px;width:112px;height:15.5px"></div>
<div class="t" style="left:286.8px;top:390.29px;font-size:11px;line-height:11px;font-weight:400;letter-spacing:0.7px;color:#111;-webkit-text-stroke:0.1px #111;">5</div>
<svg class="a" style="left:379.1px;top:413.7px" width="16.0" height="16.0" viewBox="0 0 16.0 16.0"><circle cx="8.0" cy="8.0" r="6.5" fill="url(#gblue)" stroke="url(#sblue)" stroke-width="1"/><circle cx="8.0" cy="8.0" r="5.4" fill="none" stroke="url(#hl)" stroke-width="1"/></svg>
<div class="node" style="left:682px;top:422px;width:108px;height:95px;box-shadow:0 1px 2px rgba(0,0,0,.3), 0 2px 5px rgba(0,0,0,.2);"><div class="hdr" style="height:43px"></div><div class="sep"></div><div class="bdy" style="height:44px"></div><div class="ftr" style="height:7px"></div></div>
<svg class="a" style="left:684px;top:428px" width="38" height="30" viewBox="0 0 38 30"><defs><linearGradient id="gVenn" x1="0" y1="0" x2="0" y2="1"><stop offset="0" stop-color="#f4f4f4"/><stop offset="1" stop-color="#d4d4d4"/></linearGradient></defs><circle cx="13.7" cy="15" r="8.9" fill="#9a9a9a" opacity=".6"/><circle cx="24.1" cy="15" r="8.9" fill="#9a9a9a" opacity=".6"/><circle cx="13.7" cy="14.6" r="8.7" fill="url(#gVenn)" stroke="#b4b4b4" stroke-width="0.8"/><circle cx="24.1" cy="14.6" r="8.7" fill="url(#gVenn)" stroke="#b4b4b4" stroke-width="0.8"/><path d="M18.95,6.6 C24.2,9.2 24.2,19.6 18.95,22.2 C13.7,19.6 13.7,9.2 18.95,6.6 Z" fill="#a8d2f4" stroke="#2a72c8" stroke-width="1.3"/></svg>
<div class="t" style="left:724.9px;top:437.00px;font-size:13px;line-height:13px;font-weight:400;letter-spacing:0.5px;color:#111;">And</div>
<svg class="a" style="left:687.0px;top:470.8px" width="16.0" height="16.0" viewBox="0 0 16.0 16.0"><circle cx="8.0" cy="8.0" r="6.5" fill="url(#gpink)" stroke="url(#spink)" stroke-width="1"/><circle cx="8.0" cy="8.0" r="5.4" fill="none" stroke="url(#hl)" stroke-width="1"/></svg>
<svg class="a" style="left:687.0px;top:489.6px" width="16.0" height="16.0" viewBox="0 0 16.0 16.0"><circle cx="8.0" cy="8.0" r="6.5" fill="url(#gpink)" stroke="url(#spink)" stroke-width="1"/><circle cx="8.0" cy="8.0" r="5.4" fill="none" stroke="url(#hl)" stroke-width="1"/></svg>
<svg class="a" style="left:769.0px;top:470.8px" width="16.0" height="16.0" viewBox="0 0 16.0 16.0"><circle cx="8.0" cy="8.0" r="6.5" fill="url(#gpink)" stroke="url(#spink)" stroke-width="1"/><circle cx="8.0" cy="8.0" r="5.4" fill="none" stroke="url(#hl)" stroke-width="1"/></svg>
<div class="t" style="left:707.8px;top:473.99px;font-size:11px;line-height:11px;font-weight:400;letter-spacing:0px;color:#111;-webkit-text-stroke:0.1px #111;">A</div>
<div class="t" style="left:707.8px;top:492.69px;font-size:11px;line-height:11px;font-weight:400;letter-spacing:0px;color:#111;-webkit-text-stroke:0.1px #111;">B</div>
<div class="t" style="left:732px;top:473.99px;font-size:11px;line-height:11px;font-weight:400;letter-spacing:0.85px;color:#111;-webkit-text-stroke:0.1px #111;">A &amp; B</div>
<div class="node" style="left:284px;top:497px;width:165px;height:113px;box-shadow:0 1px 2px rgba(0,0,0,.3), 0 2px 5px rgba(0,0,0,.2);"><div class="hdr" style="height:41px"></div><div class="sep"></div><div class="bdy" style="height:64px"></div><div class="ftr" style="height:7px"></div></div>
<svg class="a" style="left:290px;top:503px" width="30" height="30" viewBox="0 0 30 30"><circle cx="15" cy="15.3" r="14.1" fill="url(#gorange)" stroke="#d86a18" stroke-width="1.3"/><circle cx="15" cy="15.3" r="12.4" fill="none" stroke="url(#hl)" stroke-width="1.2"/></svg>
<div class="t" style="left:326.9px;top:504.11px;font-size:10.5px;line-height:10.5px;font-weight:400;letter-spacing:0.85px;color:#000;-webkit-text-stroke:0.1px #000;">String</div>
<div class="t" style="left:326.8px;top:517.50px;font-size:13px;line-height:13px;font-weight:400;letter-spacing:0.5px;color:#111;">Contains</div>
<svg class="a" style="left:289.5px;top:546px" width="15" height="14" viewBox="0 0 15 14"><path d="M0.8,3.6 H7.2 V0.8 L13.8,6.7 L7.2,12.6 V9.8 H0.8 Z" fill="url(#gArrow)" stroke="#4e8a00" stroke-width="1.3" stroke-linejoin="round"/></svg>
<svg class="a" style="left:428.5px;top:546px" width="15" height="14" viewBox="0 0 15 14"><path d="M0.8,3.6 H7.2 V0.8 L13.8,6.7 L7.2,12.6 V9.8 H0.8 Z" fill="url(#gArrow)" stroke="#4e8a00" stroke-width="1.3" stroke-linejoin="round"/></svg>
<svg class="a" style="left:289.0px;top:563.9px" width="16.0" height="16.0" viewBox="0 0 16.0 16.0"><circle cx="8.0" cy="8.0" r="6.5" fill="url(#gorange)" stroke="url(#sorange)" stroke-width="1"/><circle cx="8.0" cy="8.0" r="5.4" fill="none" stroke="url(#hl)" stroke-width="1"/></svg>
<svg class="a" style="left:289.0px;top:583.1px" width="16.0" height="16.0" viewBox="0 0 16.0 16.0"><circle cx="8.0" cy="8.0" r="6.5" fill="url(#gorange)" stroke="url(#sorange)" stroke-width="1"/><circle cx="8.0" cy="8.0" r="5.4" fill="none" stroke="url(#hl)" stroke-width="1"/></svg>
<svg class="a" style="left:427.9px;top:563.9px" width="16.0" height="16.0" viewBox="0 0 16.0 16.0"><circle cx="8.0" cy="8.0" r="6.5" fill="url(#gpink)" stroke="url(#spink)" stroke-width="1"/><circle cx="8.0" cy="8.0" r="5.4" fill="none" stroke="url(#hl)" stroke-width="1"/></svg>
<div class="t" style="left:310.4px;top:586.19px;font-size:11px;line-height:11px;font-weight:400;letter-spacing:1.0px;color:#111;-webkit-text-stroke:0.1px #111;">Value</div>
<div class="fld" style="left:347.2px;top:582.7px;width:64.5px;height:16px"></div>
<div class="t" style="left:350.7px;top:586.19px;font-size:11px;line-height:11px;font-weight:400;letter-spacing:0.7px;color:#111;-webkit-text-stroke:0.1px #111;">Player</div>
<div style="position:absolute;left:189px;top:185px;width:121px;height:77px;background:rgba(139,180,242,.34);border:1px solid rgba(235,240,250,.75)"></div>
<svg class="a" style="left:0;top:0" width="796" height="626"><defs><clipPath id="selclip"><rect x="190" y="186" width="119" height="75"/></clipPath></defs><path clip-path="url(#selclip)" d="M150.5,238 L156.08,238 C183.59,238 218.73,281.8 249.3,281.8 L253.4,281.8" stroke="#96eee0" stroke-width="2.1" fill="none" opacity=".85"/></svg>
<svg class="a" style="left:314px;top:264px" width="14" height="20" viewBox="0 0 14 20"><path d="M0.6,0.6 V16.4 L4.6,12.9 L7.7,18.6 L9.9,17.5 L7.2,12.2 H12.1 Z" fill="#fff" stroke="#111" stroke-width="1.15" stroke-linejoin="round"/></svg>
<div style="position:absolute;left:788px;top:36px;width:5px;height:587px;background:linear-gradient(90deg,rgba(0,0,0,0),rgba(0,0,0,.18))"></div>
<div style="position:absolute;left:3px;top:36px;width:3px;height:587px;background:linear-gradient(90deg,rgba(0,0,0,.15),rgba(0,0,0,0))"></div>
<div style="position:absolute;left:0;top:36px;width:3px;height:590px;background:linear-gradient(90deg,#ababab,#999999 40%,#7c7c7c)"></div>
<div style="position:absolute;left:793px;top:36px;width:3px;height:590px;background:linear-gradient(90deg,#6a6a6a,#8c8c8c 50%,#a9a9a9)"></div>
<div style="position:absolute;left:0;top:623px;width:796px;height:3px;background:linear-gradient(#858585,#a2a2a2 50%,#ababab)"></div>
</body></html>
